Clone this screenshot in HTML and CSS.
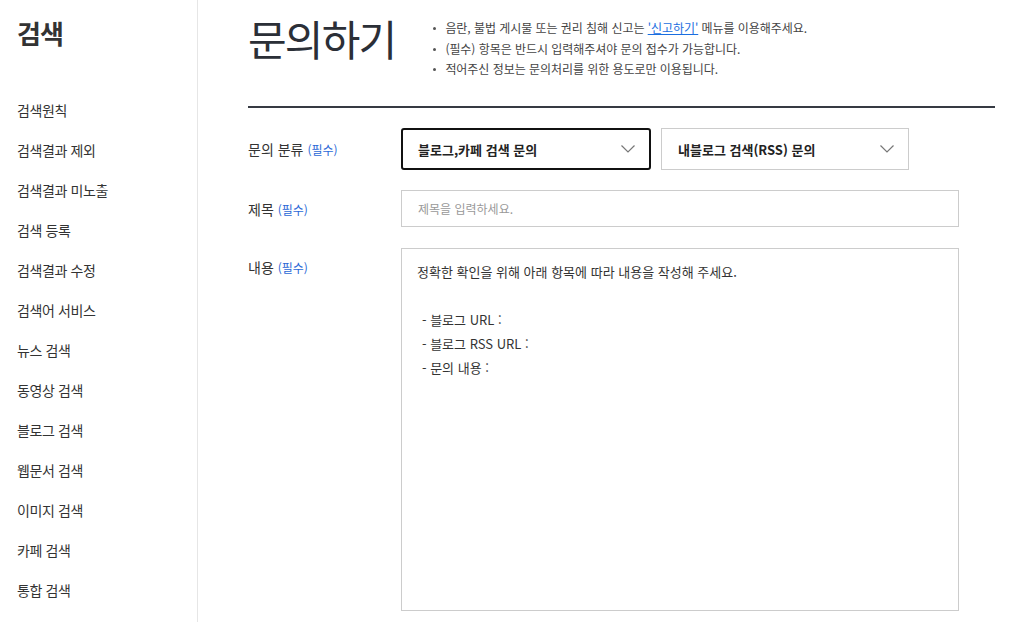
FILE: index.html
```html
<!DOCTYPE html>
<html lang="ko">
<head>
<meta charset="utf-8">
<title>문의하기</title>
<link rel="stylesheet" href="styles.css">
</head>
<body>
<div class="page">
  <aside class="sidebar">
    <h2 class="side-title">검색</h2>
    <ul class="side-menu">
      <li>검색원칙</li>
      <li>검색결과 제외</li>
      <li>검색결과 미노출</li>
      <li>검색 등록</li>
      <li>검색결과 수정</li>
      <li>검색어 서비스</li>
      <li>뉴스 검색</li>
      <li>동영상 검색</li>
      <li>블로그 검색</li>
      <li>웹문서 검색</li>
      <li>이미지 검색</li>
      <li>카페 검색</li>
      <li>통합 검색</li>
    </ul>
  </aside>
  <main class="main">
    <header class="head">
      <h1 class="title">문의하기</h1>
      <ul class="notes">
        <li>음란, 불법 게시물 또는 권리 침해 신고는 <a class="link" href="#">'신고하기'</a> 메뉴를 이용해주세요.</li>
        <li>(필수) 항목은 반드시 입력해주셔야 문의 접수가 가능합니다.</li>
        <li>적어주신 정보는 문의처리를 위한 용도로만 이용됩니다.</li>
      </ul>
    </header>
    <div class="form">
      <div class="row row-select">
        <div class="label">문의 분류 <span class="req">(필수)</span></div>
        <div class="selects">
          <div class="select active">
            <span>블로그,카페 검색 문의</span>
            <svg class="chev" width="14" height="8" viewBox="0 0 14 8"><polyline points="0.5,0.5 7,7 13.5,0.5" fill="none" stroke="#777" stroke-width="1.2"/></svg>
          </div>
          <div class="select">
            <span>내블로그 검색(RSS) 문의</span>
            <svg class="chev" width="14" height="8" viewBox="0 0 14 8"><polyline points="0.5,0.5 7,7 13.5,0.5" fill="none" stroke="#777" stroke-width="1.2"/></svg>
          </div>
        </div>
      </div>
      <div class="row row-input">
        <div class="label">제목 <span class="req">(필수)</span></div>
        <div class="input">제목을 입력하세요.</div>
      </div>
      <div class="row row-text">
        <div class="label label-top">내용 <span class="req">(필수)</span></div>
        <div class="textarea">
          <p>정확한 확인을 위해 아래 항목에 따라 내용을 작성해 주세요.</p>
          <p>&nbsp;</p>
          <p class="ind">- 블로그 URL :</p>
          <p class="ind">- 블로그 RSS URL :</p>
          <p class="ind">- 문의 내용 :</p>
        </div>
      </div>
    </div>
  </main>
</div>
</body>
</html>
```
FILE: styles.css
```css
* { box-sizing: border-box; }
html, body {
  margin: 0;
  padding: 0;
  background: #fff;
}
body {
  font-family: "Noto Sans CJK KR", "Noto Sans", sans-serif;
  color: #333;
}
.page {
  display: flex;
  min-height: 622px;
}
.sidebar {
  width: 198px;
  flex: none;
  border-right: 1px solid #e6e6e6;
  padding: 16px 0 0 17px;
}
.side-title {
  margin: 0;
  font-size: 26px;
  line-height: 34px;
  font-weight: 700;
  color: #333;
  letter-spacing: -1px;
}
.side-menu {
  list-style: none;
  margin: 40px 0 0;
  padding: 0;
}
.side-menu li {
  font-size: 14px;
  line-height: 40px;
  letter-spacing: -0.4px;
  color: #333;
}
.main {
  flex: 1;
  padding: 0 17px 0 50px;
}
.head {
  display: flex;
  align-items: flex-start;
  height: 88px;
  padding-top: 18px;
  box-sizing: content-box;
  border-bottom: 2px solid #363a43;
}
.title {
  margin: 0;
  font-size: 42px;
  line-height: 40px;
  font-weight: 400;
  color: #2b2f37;
  letter-spacing: -1.8px;
}
.notes {
  list-style: none;
  margin: 0 0 0 38px;
  padding: 0;
  font-size: 12px;
  line-height: 20.5px;
  letter-spacing: -0.05px;
  color: #444;
}
.notes li {
  position: relative;
  padding-left: 12px;
}
.notes li::before {
  content: "";
  position: absolute;
  left: 0;
  top: 9px;
  width: 3px;
  height: 3px;
  border-radius: 50%;
  background: #555;
}
.link {
  color: #1a6ee0;
  text-decoration: underline;
}
.form {
  padding-top: 20px;
}
.row {
  display: flex;
}
.row-select { align-items: center; height: 42px; }
.row-input { align-items: center; height: 37px; margin-top: 20px; }
.row-text { align-items: flex-start; margin-top: 21px; }
.label {
  width: 153px;
  flex: none;
  font-size: 14px;
  color: #333;
}
.label-top {
  padding-top: 8px;
  line-height: 22px;
}
.req {
  font-size: 12px;
  color: #2a68d6;
}
.selects {
  display: flex;
  gap: 10px;
}
.select {
  width: 248px;
  height: 42px;
  border: 1px solid #ccc;
  display: flex;
  align-items: center;
  justify-content: space-between;
  padding: 0 14px 0 16px;
  font-size: 13px;
  font-weight: 700;
  color: #222;
}
.select.active {
  width: 250px;
  border: 2px solid #111;
  border-radius: 3px;
  padding: 0 14px 0 15px;
}
.chev { flex: none; }
.input {
  width: 558px;
  height: 37px;
  border: 1px solid #ccc;
  padding: 0 16px;
  display: flex;
  align-items: center;
  font-size: 12px;
  color: #999;
}
.textarea {
  width: 558px;
  height: 363px;
  border: 1px solid #ccc;
  padding: 11px 15px;
  font-size: 13px;
  line-height: 24px;
  color: #333;
}
.textarea p {
  margin: 0;
}
.textarea .ind {
  padding-left: 5px;
}
```
